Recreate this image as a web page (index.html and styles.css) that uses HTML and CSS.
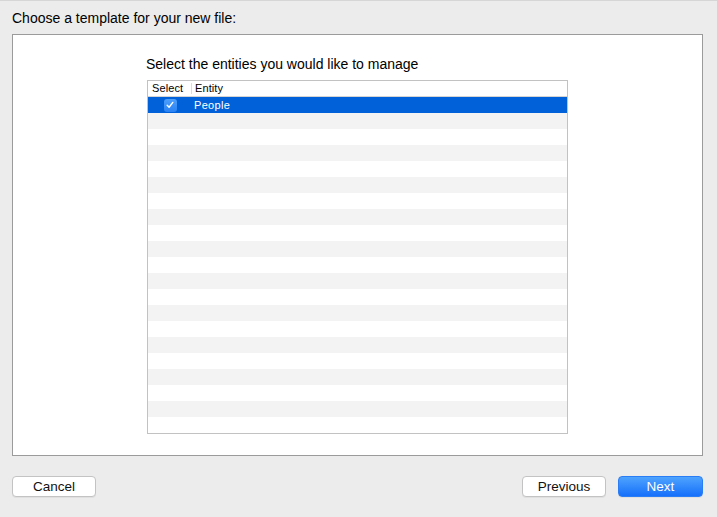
FILE: index.html
```html
<!DOCTYPE html>
<html lang="en">
<head>
  <meta charset="UTF-8" />
  <title>Choose a template</title>
  <link rel="stylesheet" href="styles.css">
</head>
<body>
  <div class="sheet">
    <h1 class="title">Choose a template for your new file:</h1>

    <div class="panel">
      <div class="chooser">
        <h2 class="prompt">Select the entities you would like to manage</h2>

        <div class="table">
          <div class="head">
            <span class="col-select">Select</span>
            <span class="col-entity">Entity</span>
          </div>
          <div class="rows">
            <div class="row selected">
              <span class="col-select">
                <span class="check">
                  <svg width="8" height="8" viewBox="0 0 8 8"><path d="M1.2 4.3 L3.1 6.2 L6.8 1.4" fill="none" stroke="#fff" stroke-width="1.4" stroke-linecap="round" stroke-linejoin="round"/></svg>
                </span>
              </span>
              <span class="col-entity">People</span>
            </div>
            <div class="row"></div>
            <div class="row"></div>
            <div class="row"></div>
            <div class="row"></div>
            <div class="row"></div>
            <div class="row"></div>
            <div class="row"></div>
            <div class="row"></div>
            <div class="row"></div>
            <div class="row"></div>
            <div class="row"></div>
            <div class="row"></div>
            <div class="row"></div>
            <div class="row"></div>
            <div class="row"></div>
            <div class="row"></div>
            <div class="row"></div>
            <div class="row"></div>
            <div class="row"></div>
            <div class="row"></div>
          </div>
        </div>
      </div>
    </div>

    <div class="actions">
      <button class="btn">Cancel</button>
      <span class="spacer"></span>
      <button class="btn">Previous</button>
      <button class="btn primary">Next</button>
    </div>
  </div>
</body>
</html>
```

FILE: styles.css
```css
body {
  margin: 0;
  background: #ececec;
  font-family: "Liberation Sans", Arial, sans-serif;
  font-size: 13px;
  color: #000;
}
.sheet {
  border-top: 1px solid #d6d6d6;
  height: 516px;
  display: flex;
  flex-direction: column;
}
.title {
  font-size: 14px;
  font-weight: normal;
  margin: 0;
  padding: 10px 12px 8px;
  line-height: 15px;
}
.panel {
  margin-left: 12px;
  width: 689px;
  height: 420px;
  background: #fff;
  border: 1px solid #9b9b9b;
  display: flex;
  justify-content: center;
}
.chooser {
  width: 421px;
}
.prompt {
  font-size: 14px;
  font-weight: normal;
  margin: 0;
  padding: 22px 0 8px;
  line-height: 15px;
  margin-left: -1px;
}
.table {
  border: 1px solid #c2c2c2;
}
.head {
  display: flex;
  height: 15px;
  border-bottom: 1px solid #d4d4d4;
  font-size: 11px;
  line-height: 15px;
}
.head .col-select {
  width: 39px;
  padding-left: 4px;
  border-right: 1px solid #dcdcdc;
  margin: 2px 0;
  line-height: 11px;
  letter-spacing: 0.1px;
}
.head .col-entity {
  padding-left: 3px;
  letter-spacing: 0.1px;
}
.rows .row {
  height: 16px;
  display: flex;
  align-items: center;
  font-size: 11px;
}
.rows .row:nth-child(even) {
  background: #f3f3f3;
}
.rows .row.selected {
  background: #0061d8;
  color: #fff;
}
.row .col-select {
  width: 44px;
  display: flex;
  justify-content: center;
}
.row .col-entity {
  padding-left: 2px;
  letter-spacing: 0.3px;
}
.check {
  width: 13px;
  height: 13px;
  border-radius: 3px;
  background: linear-gradient(#4d9ffb, #2a82f4);
  display: flex;
  align-items: center;
  justify-content: center;
}
.actions {
  display: flex;
  gap: 12px;
  padding: 20px 14px 0 12px;
}
.spacer {
  flex: 1;
}
.btn {
  width: 84px;
  height: 21px;
  font-family: inherit;
  font-size: 13.5px;
  background: #fff;
  border: 1px solid #c3c3c3;
  border-radius: 4px;
  color: #111;
  padding: 0;
  box-shadow: 0 1px 0 rgba(0, 0, 0, 0.05);
}
.btn.primary {
  width: 85px;
  border-color: #2a7df5;
  background: linear-gradient(#4ea3fd, #1670fb);
  color: #fff;
}
```
